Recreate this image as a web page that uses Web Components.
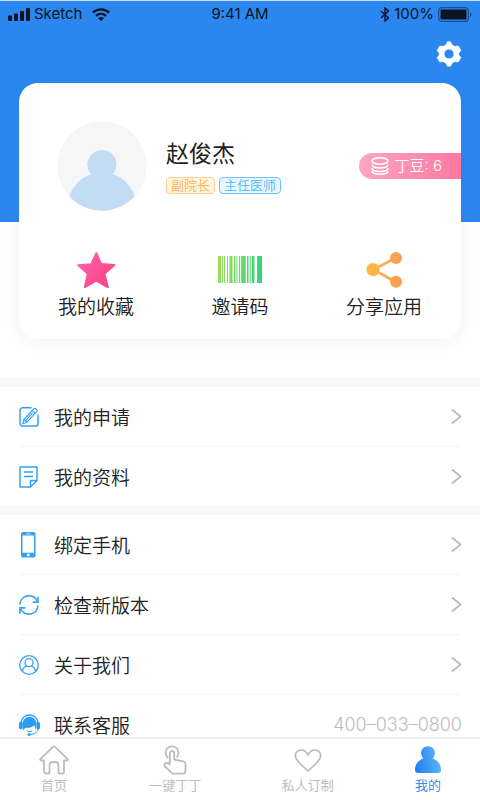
<!DOCTYPE html>
<html lang="zh-CN">
<head>
<meta charset="utf-8">
<meta name="viewport" content="width=device-width, initial-scale=1">
<title>我的</title>
<style>
  html, body { margin: 0; height: 100%; }
  body {
    font-family: Inter, "Noto Sans CJK SC", sans-serif;
    color: #222;
    background: #fff;
    --blue: #2b87f0;
    --line: #f3f3f4;
    --gap: #f7f7f7;
    --muted: #b9bcc6;
  }
</style>
</head>
<body>
<profile-page>
  <page-header slot="top"></page-header>
  <profile-card name="赵俊杰" beans="6">
    <level-tag slot="tags" tone="orange">副院长</level-tag>
    <level-tag slot="tags" tone="blue">主任医师</level-tag>
    <quick-action icon="star">我的收藏</quick-action>
    <quick-action icon="barcode">邀请码</quick-action>
    <quick-action icon="share">分享应用</quick-action>
  </profile-card>
  <menu-group>
    <menu-row icon="edit">我的申请</menu-row>
    <menu-row icon="note">我的资料</menu-row>
  </menu-group>
  <menu-group>
    <menu-row icon="phone">绑定手机</menu-row>
    <menu-row icon="refresh">检查新版本</menu-row>
    <menu-row icon="about">关于我们</menu-row>
    <menu-row icon="service" value="400–033–0800">联系客服</menu-row>
  </menu-group>
  <tab-bar slot="bottom">
    <tab-item icon="home">首页</tab-item>
    <tab-item icon="tap">一键丁丁</tab-item>
    <tab-item icon="heart">私人订制</tab-item>
    <tab-item icon="me" active>我的</tab-item>
  </tab-bar>
</profile-page>

<script>
const ICONS = {
  signal: [22, 14, `<rect x="0" y="8.500" width="4" height="5.500" rx="1"/><rect x="6" y="6.500" width="4" height="7.500" rx="1"/><rect x="12" y="4" width="4" height="10" rx="1"/><rect x="18" y="1" width="4" height="13" rx="1"/>`],
  wifi: [18, 13, `<g fill="none" stroke="currentColor" stroke-width="2.300"><path d="M.9 4.600C5.500.2 12.500.2 17.100 4.600"/><path d="M4 7.900c2.900-2.600 7.100-2.600 10 0"/></g><path d="M6 10.200c1.800-1.500 4.200-1.500 6 0l-3 2.800z"/>`],
  bluetooth: [10, 15, `<path d="M1 4l7.500 7L5 14V1l3.500 3L1 11" fill="none" stroke="currentColor" stroke-width="1.400"/>`],
  battery: [34, 15, `<rect x=".7" y=".7" width="29.600" height="13.600" rx="3" fill="none" stroke="currentColor" stroke-opacity=".5" stroke-width="1.200"/><rect x="2.500" y="2.500" width="26" height="10" rx="1"/><path d="M32 5c2 .8 2 4.200 0 5z" opacity=".5"/>`],
  gear: [26, 26, `<path fill-rule="evenodd" stroke="currentColor" stroke-width=".8" stroke-linejoin="round" d="M11.500.8h3l1.400 3.100c1.100.4 2 .9 2.800 1.600l3.600-.4 2.500 4.300-2.100 2.600v2l2.100 2.600-2.500 4.300-3.600-.4c-.8.700-1.700 1.200-2.800 1.600l-1.400 3.100h-3l-1.400-3.100c-1.100-.4-2-.9-2.800-1.600l-3.600.4-2.500-4.300 2.100-2.600v-2L1.200 9.400l2.500-4.300 3.600.4c.8-.7 1.700-1.200 2.800-1.600zM13 8a5 5 0 1 0 0 10 5 5 0 0 0 0-10z"/>`],
  avatar: [90, 90, `<defs><clipPath id="c"><circle cx="45" cy="45" r="44.700"/></clipPath></defs><circle cx="45" cy="45" r="44.700" fill="#f6f6f7"/><g clip-path="url(#c)" fill="#c1dcf4"><circle cx="45" cy="43.500" r="14.500"/><path d="M11 80C14 66 24 56 34 53.500h22C66 56 76 66 79 80v12H11z"/></g>`],
  coins: [18, 18, `<g fill="none" stroke="currentColor" stroke-width="1.500"><ellipse cx="9" cy="4" rx="8" ry="3.200"/><path d="M1 7.500c0 4.700 16 4.700 16 0M1 11c0 4.700 16 4.700 16 0M1 14c0 4.300 16 4.300 16 0"/></g>`],
  star: [40, 38, `<defs><linearGradient id="g" x2="1" y2="1"><stop stop-color="#ff63b0"/><stop offset="1" stop-color="#fd3f80"/></linearGradient></defs><path fill="url(#g)" stroke="url(#g)" stroke-width="2" stroke-linejoin="round" d="M20.300 2.200l5 10.900 13 1-9.800 8.700 3.300 13.300-11.500-6.400-11.500 6.400L11.800 22.800 2.300 14.200l13-1z"/>`],
  barcode: [44, 38, `<defs><linearGradient id="g" gradientUnits="userSpaceOnUse" x1="0" x2="44" y1="0" y2="10"><stop stop-color="#a5de58"/><stop offset="1" stop-color="#34d67c"/></linearGradient></defs><path fill="url(#g)" d="M0 5h3v27H0zM4 5h1v27H4zM6 5h1v27H6zM9 5h1v27H9zM11.500 5h3v27h-3zM16 5h1.500v27H16zM18.500 5h1v27h-1zM21 5h1.200v27H21zM23.200 5h4.500v27h-4.500zM29 5h1.500v27H29zM31.700 5h1v27h-1zM34 5h2.500v27H34zM39 5h5v27h-5z"/>`],
  share: [36, 38, `<defs><linearGradient id="g" gradientUnits="userSpaceOnUse" x1="0" x2="36" y1="18" y2="22"><stop stop-color="#fdbb49"/><stop offset="1" stop-color="#fd9b52"/></linearGradient></defs><path d="M30 7L7 18.500 30 31" fill="none" stroke="url(#g)" stroke-width="2.600"/><g fill="url(#g)"><circle cx="7" cy="18.500" r="6.600"/><circle cx="30" cy="7" r="6"/><circle cx="30" cy="30.800" r="6"/></g>`],
  edit: [21, 22, `<g fill="none" stroke="#37a0f6" stroke-linejoin="round" stroke-linecap="round"><path stroke-width="1.500" d="M12 1.800H3.500A2.500 2.500 0 0 0 1 4.300v13.200A2.500 2.500 0 0 0 3.500 20h13a2.500 2.500 0 0 0 2.500-2.500V9"/><path stroke-width="1.200" d="M15 2.600c1.200-.9 3.700 1.200 2.900 2.800L8 16.200l-4.300 1.600L5 13.500zM13.300 4.600l2.800 2.500M5 13.500l3 2.700M6.700 14.600l6.600-7.500"/></g>`],
  note: [20, 22, `<g fill="none" stroke="#37a0f6" stroke-width="1.500" stroke-linejoin="round"><path d="M1 1h17v13.500L11.500 21H1zM18 14.500h-6.500V21M5 6h9M5 10.500h9"/></g>`],
  phone: [18, 26, `<path fill="#37a0f6" fill-rule="evenodd" d="M3 0h10.500a2 2 0 0 1 2 2v21.500a2 2 0 0 1-2 2H3a2 2 0 0 1-2-2V2a2 2 0 0 1 2-2zM2.500 3.500v17.200H14V3.500zM8.300 21.600a1.500 1.500 0 1 0 0 3 1.500 1.500 0 0 0 0-3zM6 1.400v.9h4.500v-.9z"/>`],
  refresh: [20, 20, `<g fill="none" stroke="#37a0f6" stroke-width="1.600"><path d="M1 9.500C1.500-.5 14.500-2.500 18.500 6.800M19 10.500c-.8 10-13.500 11.500-17.500 3"/><path d="M19 1.800V7.100h-5.300M1 18.700v-5.800h5.300"/></g>`],
  about: [20, 20, `<g fill="none" stroke="#37a0f6" stroke-width="1.300"><circle cx="10" cy="10" r="9.300"/><circle cx="10" cy="7.700" r="4"/><path d="M3.300 16.400c.8-3.300 2.700-5.200 5-5.700M16.700 16.400c-.8-3.300-2.700-5.200-5-5.700"/></g>`],
  service: [21, 22, `<path d="M2 8.500C4-1.500 17-1.500 19 8.500" fill="none" stroke="#2a9df4" stroke-width="1.300"/><g fill="#2a9df4"><path d="M4.500 16.500C1 8 5.500 2.700 10.500 2.700S20 8 16.500 16.500c.2-2.300-.3-3.900-1.300-5-2.300 2-5 2.600-7.700 2.300-1.400.3-2.500 1.100-3 2.700z"/><path d="M0 9.500C0 7.800 3.400 7.200 3.400 8.500v6c0 1.500-3.400.9-3.400-.8zM21 9.500c0-1.700-3.400-2.300-3.400-1v6c0 1.500 3.400.9 3.400-.8z"/><circle cx="10" cy="20.500" r="1.500"/></g><path d="M19.500 14c-.8 4-4 6.400-9 6.500M8 16.700c1.500 1.300 3.800 1.300 5.200 0" fill="none" stroke="#2a9df4" stroke-width="1"/>`],
  chevron: [11, 17, `<path d="M1 1.500l8.500 7L1 15.500" fill="none" stroke="#b5b8c3" stroke-width="1.700"/>`],
  home: [30, 30, `<path d="M14 1.800a1.500 1.500 0 0 1 2 0L28.500 14c.6.700.2 1.500-.6 1.500H25v11a2 2 0 0 1-2 2h-2.500a1 1 0 0 1-1-1V21c0-3.500-1-4-4.500-4s-4.500.5-4.500 4v6.500a1 1 0 0 1-1 1H7a2 2 0 0 1-2-2v-11H2.100c-.8 0-1.200-.8-.6-1.500z" fill="none" stroke="#bdbdbd" stroke-width="1.800" stroke-linejoin="round"/>`],
  tap: [24, 30, `<g fill="none" stroke="#bdbdbd" stroke-width="1.800" stroke-linejoin="round" stroke-linecap="round"><path d="M4.500 12.500A6.500 6.500 0 1 1 14 12"/><path d="M6.800 19.500V8.300c0-3.100 4.400-3.100 4.400 0v6.200l8.800 1.800c1.500.3 2.500 1 2.500 2.500v7c0 2-1.300 2.800-2.500 2.800H9.500L2 21.500c-2-2.500 1.300-4.500 3.300-3.300z"/></g>`],
  heart: [28, 30, `<path d="M14 26C11 23 5 18.200 2.300 14-.2 9.500 2.500 5 7.500 5c3 0 5 2 6.500 5 1.500-3 3.500-5 6.500-5 5 0 7.700 4.500 5.200 9C23 18.200 17 23 14 26z" fill="none" stroke="#bdbdbd" stroke-width="1.700" stroke-linejoin="round"/>`],
  me: [28, 30, `<defs><linearGradient id="g" x1="0" x2="1" y1=".6" y2=".4"><stop stop-color="#267ff0"/><stop offset="1" stop-color="#5db8fd"/></linearGradient></defs><path fill="url(#g)" d="M14 1.200c6.300 0 9.300 7.300 4.800 12.200C24 15.200 27 20 27 24.500c0 2.700-1 3.500-3.500 3.500h-19C2 28 1 27.200 1 24.500c0-4.500 3-9.300 8.200-11.100C4.700 8.500 7.700 1.200 14 1.200z"/>`]
};

const define = (name, render) => customElements.define(name, class extends HTMLElement {
  constructor() {
    super();
    this.attachShadow({ mode: "open" }).innerHTML = render(this);
  }
});

define("ui-icon", el => {
  const [w, h, body] = ICONS[el.getAttribute("name")];
  return `<style>:host{display:inline-flex;flex:none}svg{display:block}</style>
    <svg width="${w}" height="${h}" viewBox="0 0 ${w} ${h}" fill="currentColor" aria-hidden="true">${body}</svg>`;
});

define("status-bar", () => `<style>
    :host{display:grid;grid-template-columns:1fr auto 1fr;align-items:center;height:26px;padding:0 8px;color:#0b1420;font-size:15px;line-height:26px}
    div{display:flex;align-items:center;gap:4px}
    .carrier{margin-right:6px}
    .right{justify-content:flex-end}
  </style>
  <div><ui-icon name="signal"></ui-icon><span class="carrier">Sketch</span><ui-icon name="wifi"></ui-icon></div>
  <span>9:41 AM</span>
  <div class="right"><ui-icon name="bluetooth"></ui-icon><span>100%</span><ui-icon name="battery"></ui-icon></div>`);

define("page-header", () => `<style>
    :host{display:block;background:var(--blue);border-top:1px solid #cfe2fa;padding-bottom:139px}
    nav{display:flex;justify-content:flex-end;padding:14px 18px 16px}
    button{display:flex;padding:0;border:0;background:none;color:#fff}
  </style>
  <status-bar></status-bar>
  <nav><button aria-label="设置"><ui-icon name="gear"></ui-icon></button></nav>`);

define("level-tag", el => {
  const [ink, edge, fill] = el.getAttribute("tone") === "orange"
    ? ["#ffb54d", "#ffd08c", "#fff4e5"] : ["#4db8fb", "#6cc4fb", "#e9f6ff"];
  return `<style>:host{display:block;box-sizing:border-box;height:17px;padding:0 4px;border:1px solid ${edge};border-radius:4px;background:${fill};color:${ink};font-size:13px;line-height:15px;font-weight:350}</style><slot></slot>`;
});

define("profile-card", el => `<style>
    :host{display:block;position:relative;margin:-139px 19px 39px;padding:38px 0 17px;border-radius:19px;background:#fff;box-shadow:0 3px 20px rgba(0,0,0,.05)}
    .person{display:flex;align-items:center;padding-left:38px}
    .info{flex:1;display:grid;gap:8px;padding-left:19px}
    h1{margin:0;font-size:23px;line-height:30px;font-weight:400}
    .tags{display:flex;gap:4px}
    .beans{display:flex;align-items:center;gap:6px;height:26px;box-sizing:border-box;padding:0 19px 0 12px;border:0;border-radius:13px 0 0 13px;background:linear-gradient(100deg,#ffa6c6,#fc779f);color:#fff;font:inherit;font-size:15px;font-weight:350;line-height:26px}
    .actions{display:grid;grid-template-columns:repeat(3,1fr);margin-top:40px;padding:0 5px}
  </style>
  <div class="person">
    <ui-icon name="avatar"></ui-icon>
    <div class="info"><h1>${el.getAttribute("name")}</h1><div class="tags"><slot name="tags"></slot></div></div>
    <button class="beans"><ui-icon name="coins"></ui-icon><span>丁豆: ${el.getAttribute("beans")}</span></button>
  </div>
  <div class="actions"><slot></slot></div>`);

define("quick-action", el => `<style>
    :host{display:block}
    button{display:flex;flex-direction:column;align-items:center;gap:5px;width:100%;padding:0;border:0;background:none;color:inherit;font:inherit;font-size:19px;font-weight:350;line-height:28px}
  </style><button><ui-icon name="${el.getAttribute("icon")}"></ui-icon><span><slot></slot></span></button>`);

define("menu-group", () => `<style>
    :host{display:block;border-top:9px solid var(--gap)}
    div{display:grid;gap:1px;background:linear-gradient(var(--line),var(--line)) 20px 0/calc(100% - 40px) 100% no-repeat}
  </style><div><slot></slot></div>`);

define("menu-row", el => {
  const value = el.getAttribute("value");
  return `<style>
    :host{display:block;background:#fff}
    a{display:grid;grid-template-columns:20px 1fr auto;gap:15px;align-items:center;height:59px;padding:0 18px 0 19px;color:inherit;text-decoration:none;font-size:19px;font-weight:350}
    ui-icon{justify-self:center}
    .value{color:var(--muted);font-size:18px;font-weight:300}
  </style><a href="#"><ui-icon name="${el.getAttribute("icon")}"></ui-icon><span><slot></slot></span>${value ? `<span class="value">${value}</span>` : `<ui-icon name="chevron"></ui-icon>`}</a>`;
});

define("tab-bar", () => `<style>
    :host{display:block;border-top:2px solid #f0f0f1;background:#fff}
    nav{display:flex;justify-content:space-between;padding:6px 38px 5px 39px}
  </style><nav><slot></slot></nav>`);

define("tab-item", el => `<style>
    :host{display:block}
    a{display:flex;flex-direction:column;align-items:center;color:#bdbdbd;text-decoration:none;font-size:13px;line-height:20px}
    :host([active]) span{color:#3390f3}
  </style><a href="#"><ui-icon name="${el.getAttribute("icon")}"></ui-icon><span><slot></slot></span></a>`);

define("profile-page", () => `<style>
    :host{display:flex;flex-direction:column;height:100vh}
    main{flex:1;min-height:0;overflow-y:auto;scrollbar-width:none}
  </style><main><slot name="top"></slot><slot></slot></main><slot name="bottom"></slot>`);
</script>
</body>
</html>
